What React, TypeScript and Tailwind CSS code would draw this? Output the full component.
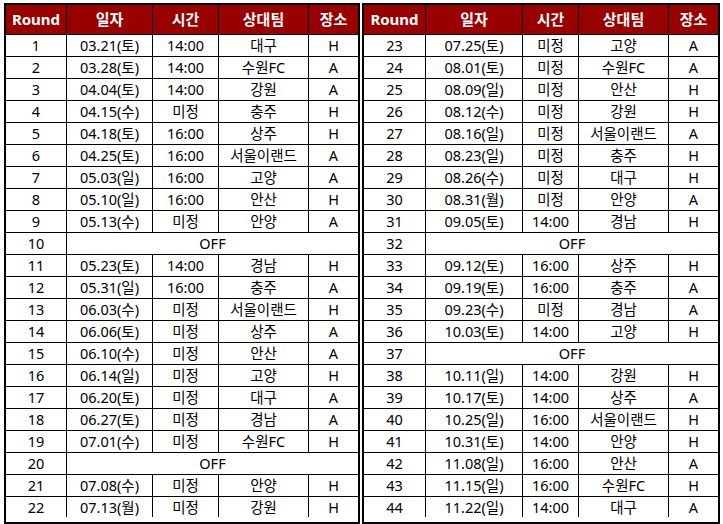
import React from 'react';

type Row = [number, string, string, string, string] | [number, 'OFF'];

const leftRows: Row[] = [
  [1, '03.21(토)', '14:00', '대구', 'H'],
  [2, '03.28(토)', '14:00', '수원FC', 'A'],
  [3, '04.04(토)', '14:00', '강원', 'A'],
  [4, '04.15(수)', '미정', '충주', 'H'],
  [5, '04.18(토)', '16:00', '상주', 'H'],
  [6, '04.25(토)', '16:00', '서울이랜드', 'A'],
  [7, '05.03(일)', '16:00', '고양', 'A'],
  [8, '05.10(일)', '16:00', '안산', 'H'],
  [9, '05.13(수)', '미정', '안양', 'A'],
  [10, 'OFF'],
  [11, '05.23(토)', '14:00', '경남', 'H'],
  [12, '05.31(일)', '16:00', '충주', 'A'],
  [13, '06.03(수)', '미정', '서울이랜드', 'H'],
  [14, '06.06(토)', '미정', '상주', 'A'],
  [15, '06.10(수)', '미정', '안산', 'A'],
  [16, '06.14(일)', '미정', '고양', 'H'],
  [17, '06.20(토)', '미정', '대구', 'A'],
  [18, '06.27(토)', '미정', '경남', 'A'],
  [19, '07.01(수)', '미정', '수원FC', 'H'],
  [20, 'OFF'],
  [21, '07.08(수)', '미정', '안양', 'H'],
  [22, '07.13(월)', '미정', '강원', 'H'],
];

const rightRows: Row[] = [
  [23, '07.25(토)', '미정', '고양', 'A'],
  [24, '08.01(토)', '미정', '수원FC', 'A'],
  [25, '08.09(일)', '미정', '안산', 'H'],
  [26, '08.12(수)', '미정', '강원', 'H'],
  [27, '08.16(일)', '미정', '서울이랜드', 'A'],
  [28, '08.23(일)', '미정', '충주', 'H'],
  [29, '08.26(수)', '미정', '대구', 'H'],
  [30, '08.31(월)', '미정', '안양', 'A'],
  [31, '09.05(토)', '14:00', '경남', 'H'],
  [32, 'OFF'],
  [33, '09.12(토)', '16:00', '상주', 'H'],
  [34, '09.19(토)', '16:00', '충주', 'A'],
  [35, '09.23(수)', '미정', '경남', 'A'],
  [36, '10.03(토)', '14:00', '고양', 'H'],
  [37, 'OFF'],
  [38, '10.11(일)', '14:00', '강원', 'H'],
  [39, '10.17(토)', '14:00', '상주', 'A'],
  [40, '10.25(일)', '16:00', '서울이랜드', 'H'],
  [41, '10.31(토)', '14:00', '안양', 'H'],
  [42, '11.08(일)', '16:00', '안산', 'A'],
  [43, '11.15(일)', '16:00', '수원FC', 'H'],
  [44, '11.22(일)', '14:00', '대구', 'A'],
];

const headers = ['Round', '일자', '시간', '상대팀', '장소'];

function Schedule({ rows, widths }: { rows: Row[]; widths: string[] }) {
  return (
    <div className="flex flex-col border-2 border-black">
      <div className="flex h-[30px] border-b border-black bg-[#990000] text-[15px] font-bold text-white">
        {headers.map((h, i) => (
          <div
            key={h}
            className={`${widths[i]} flex items-center justify-center ${i < 4 ? 'border-r border-black' : ''}`}
          >
            {h}
          </div>
        ))}
      </div>
      {rows.map((r, idx) => {
        const last = idx === rows.length - 1;
        return (
          <div
            key={r[0]}
            className={`flex text-[14.5px] text-black ${last ? 'h-[20px]' : 'h-[22px] border-b border-black'}`}
          >
            <div className={`${widths[0]} flex items-center justify-center border-r border-black`}>{r[0]}</div>
            {r.length === 2 ? (
              <div className="flex flex-1 items-center justify-center">OFF</div>
            ) : (
              <>
                <div className={`${widths[1]} flex items-center justify-center border-r border-black`}>{r[1]}</div>
                <div className={`${widths[2]} flex items-center justify-center border-r border-black`}>{r[2]}</div>
                <div className={`${widths[3]} flex items-center justify-center border-r border-black`}>{r[3]}</div>
                <div className={`${widths[4]} flex items-center justify-center`}>{r[4]}</div>
              </>
            )}
          </div>
        );
      })}
    </div>
  );
}

export default function App() {
  return (
    <div
      className="flex h-[524px] w-[723px] gap-[2px] bg-white pl-[4px] pt-[3px] leading-none"
      style={{ fontFamily: '"Noto Sans", "Noto Sans CJK KR", sans-serif' }}
    >
      <Schedule rows={leftRows} widths={['w-[61px]', 'w-[86px]', 'w-[66px]', 'w-[90px]', 'w-[49px]']} />
      <Schedule rows={rightRows} widths={['w-[62px]', 'w-[97px]', 'w-[56px]', 'w-[90px]', 'w-[49px]']} />
    </div>
  );
}
